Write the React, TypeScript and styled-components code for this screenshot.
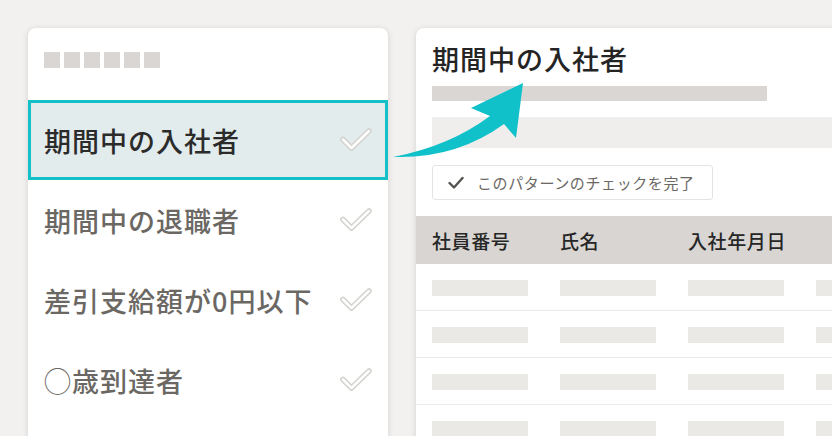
import React from "react";
import styled, { createGlobalStyle } from "styled-components";

const Global = createGlobalStyle`
  html, body { margin: 0; padding: 0; background: #f2f1ef; }
  body { font-family: "Noto Sans CJK JP", "Noto Sans", sans-serif; }
  * { box-sizing: border-box; }
`;

const Stage = styled.div`
  position: relative;
  width: 832px;
  height: 436px;
  overflow: hidden;
  background: #f2f1ef;
  display: flex;
  align-items: flex-start;
  gap: 28px;
  padding: 28px 0 0 28px;
`;

const SideCard = styled.div`
  flex: 0 0 360px;
  height: 440px;
  background: #fff;
  border-radius: 8px;
  box-shadow: 0 1px 6px rgba(0, 0, 0, 0.13);
  display: flex;
  flex-direction: column;
`;

const SideHeader = styled.div`
  height: 72px;
  padding: 24px 16px 0;
  display: flex;
  gap: 4px;
`;

const Dot = styled.span`
  width: 16px;
  height: 16px;
  background: #d9d6d3;
`;

const Item = styled.div<{ $active?: boolean }>`
  height: 80px;
  display: flex;
  align-items: center;
  justify-content: space-between;
  padding: 0 13px;
  font-size: 27px;
  letter-spacing: 1px;
  font-weight: 500;
  color: ${(p) => (p.$active ? "#2b2b2b" : "#6b6864")};
  background: ${(p) => (p.$active ? "#e3ecec" : "transparent")};
  border: 3px solid ${(p) => (p.$active ? "#12c0c8" : "transparent")};
`;

const ItemLabel = styled.span`
  line-height: 1;
`;

const MainCard = styled.div`
  flex: 0 0 480px;
  height: 440px;
  background: #fff;
  border-radius: 8px 0 0 0;
  box-shadow: 0 1px 6px rgba(0, 0, 0, 0.13);
  display: flex;
  flex-direction: column;
  padding-top: 16px;
`;

const Title = styled.h1`
  margin: 0 16px;
  font-size: 27px;
  letter-spacing: 1px;
  line-height: 30px;
  font-weight: 500;
  color: #242424;
`;

const TitleBar = styled.div`
  margin: 12px 16px 0;
  width: 335px;
  height: 15px;
  background: #d9d6d3;
`;

const Band = styled.div`
  margin: 16px 0 0 16px;
  height: 31px;
  background: #efeeec;
`;

const Actions = styled.div`
  padding: 17px 16px 16px;
  display: flex;
`;

const DoneButton = styled.button`
  height: 35px;
  width: 281px;
  display: flex;
  align-items: center;
  justify-content: flex-start;
  gap: 13px;
  padding: 0 15px;
  background: #fff;
  border: 1px solid #e6e4e1;
  border-radius: 3px;
  font-family: "Noto Sans CJK JP", sans-serif;
  font-size: 15px;
  letter-spacing: 0.6px;
  white-space: nowrap;
  color: #6b6864;

  svg {
    flex: 0 0 auto;
  }
`;

const HeadRow = styled.div`
  display: flex;
  height: 48px;
  align-items: center;
  background: #d8d5d2;
`;

const HeadCell = styled.div`
  flex: 0 0 128px;
  padding-left: 16px;
  font-size: 19px;
  letter-spacing: 0.6px;
  font-weight: 500;
  color: #262626;
`;

const BodyRow = styled.div`
  display: flex;
  height: 47px;
  padding-top: 16px;
  border-bottom: 1px solid #ecebe8;
`;

const BodyCell = styled.div`
  flex: 0 0 128px;
  padding-left: 16px;
`;

const Bar = styled.div`
  width: 96px;
  height: 16px;
  background: #ebe9e6;
`;

const Overlay = styled.svg`
  position: absolute;
  left: 0;
  top: 0;
  pointer-events: none;
`;

const HollowCheck = () => (
  <svg width="32" height="24" viewBox="0 0 32 24">
    <path d="M3 11.5 L11.5 20 L29 3" fill="none" stroke="#d3d1ce" strokeWidth="5.5" strokeLinecap="round" strokeLinejoin="round" />
    <path d="M3 11.5 L11.5 20 L29 3" fill="none" stroke="#ffffff" strokeWidth="2.5" strokeLinecap="round" strokeLinejoin="round" />
  </svg>
);

const SmallCheck = () => (
  <svg width="16" height="14" viewBox="0 0 16 14">
    <path d="M1.5 7 L6 11.5 L14.5 2" fill="none" stroke="#555350" strokeWidth="2.4" strokeLinecap="round" strokeLinejoin="round" />
  </svg>
);

const items = ["期間中の入社者", "期間中の退職者", "差引支給額が0円以下", "◯歳到達者"];
const heads = ["社員番号", "氏名", "入社年月日", ""];

export default function App() {
  return (
    <>
      <Global />
      <Stage>
        <SideCard>
          <SideHeader>
            {Array.from({ length: 6 }).map((_, i) => (
              <Dot key={i} />
            ))}
          </SideHeader>
          {items.map((t, i) => (
            <Item key={t} $active={i === 0}>
              <ItemLabel>{t}</ItemLabel>
              <HollowCheck />
            </Item>
          ))}
        </SideCard>
        <MainCard>
          <Title>期間中の入社者</Title>
          <TitleBar />
          <Band />
          <Actions>
            <DoneButton>
              <SmallCheck />
              このパターンのチェックを完了
            </DoneButton>
          </Actions>
          <HeadRow>
            {heads.map((h, i) => (
              <HeadCell key={i}>{h}</HeadCell>
            ))}
          </HeadRow>
          {[0, 1, 2, 3].map((r) => (
            <BodyRow key={r}>
              {[0, 1, 2, 3].map((c) => (
                <BodyCell key={c}>
                  <Bar />
                </BodyCell>
              ))}
            </BodyRow>
          ))}
        </MainCard>
        <Overlay width="832" height="436" viewBox="0 0 832 436">
          <path
            d="M393 157 Q450 146 490 116 L471 108 L523 83 L516 138 L504 124 Q456 159 393 157 Z"
            fill="#10c1ca"
          />
        </Overlay>
      </Stage>
    </>
  );
}
